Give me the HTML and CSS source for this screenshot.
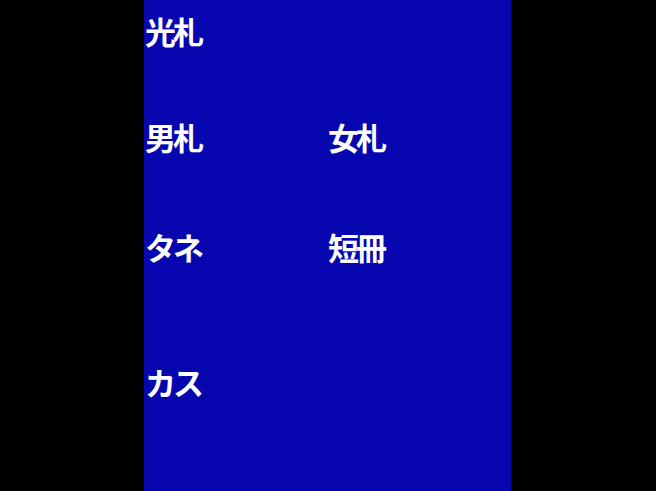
FILE: index.html
```
<!DOCTYPE html>
<html lang="ja">
<head>
  <meta charset="UTF-8">
  <title>札の種類</title>
  <link rel="stylesheet" href="styles.css">
</head>
<body>
  <div class="screen">
    <div class="board">
      <div class="row row-light">
        <span class="label">光札</span>
      </div>
      <div class="row row-pair">
        <span class="label">男札</span>
        <span class="label">女札</span>
      </div>
      <div class="row row-seed">
        <span class="label">タネ</span>
        <span class="label">短冊</span>
      </div>
      <div class="row row-junk">
        <span class="label">カス</span>
      </div>
    </div>
  </div>
</body>
</html>
```
FILE: styles.css
```
body {
  margin: 0;
  background-color: #000000;
  font-family: "Noto Sans CJK JP", sans-serif;
}

.screen {
  width: 656px;
  height: 491px;
  display: flex;
  justify-content: flex-start;
}

.board {
  margin-left: 144px;
  width: 367px;
  height: 491px;
  box-sizing: border-box;
  padding: 15px 0 0 1px;
  background-color: #0606b2;
  background-image: repeating-linear-gradient(to bottom, rgba(0, 0, 0, 0) 0, rgba(0, 0, 0, 0) 2px, rgba(0, 0, 0, 0.06) 2px, rgba(0, 0, 0, 0.06) 3px);
}

.row {
  display: grid;
  grid-template-columns: 183px 183px;
  height: 31px;
}

.row-pair {
  margin-top: 75px;
}

.row-seed {
  margin-top: 79px;
}

.row-junk {
  margin-top: 104px;
}

.label {
  color: #ffffff;
  font-size: 31px;
  font-weight: 700;
  line-height: 31px;
  letter-spacing: -3px;
}
```
